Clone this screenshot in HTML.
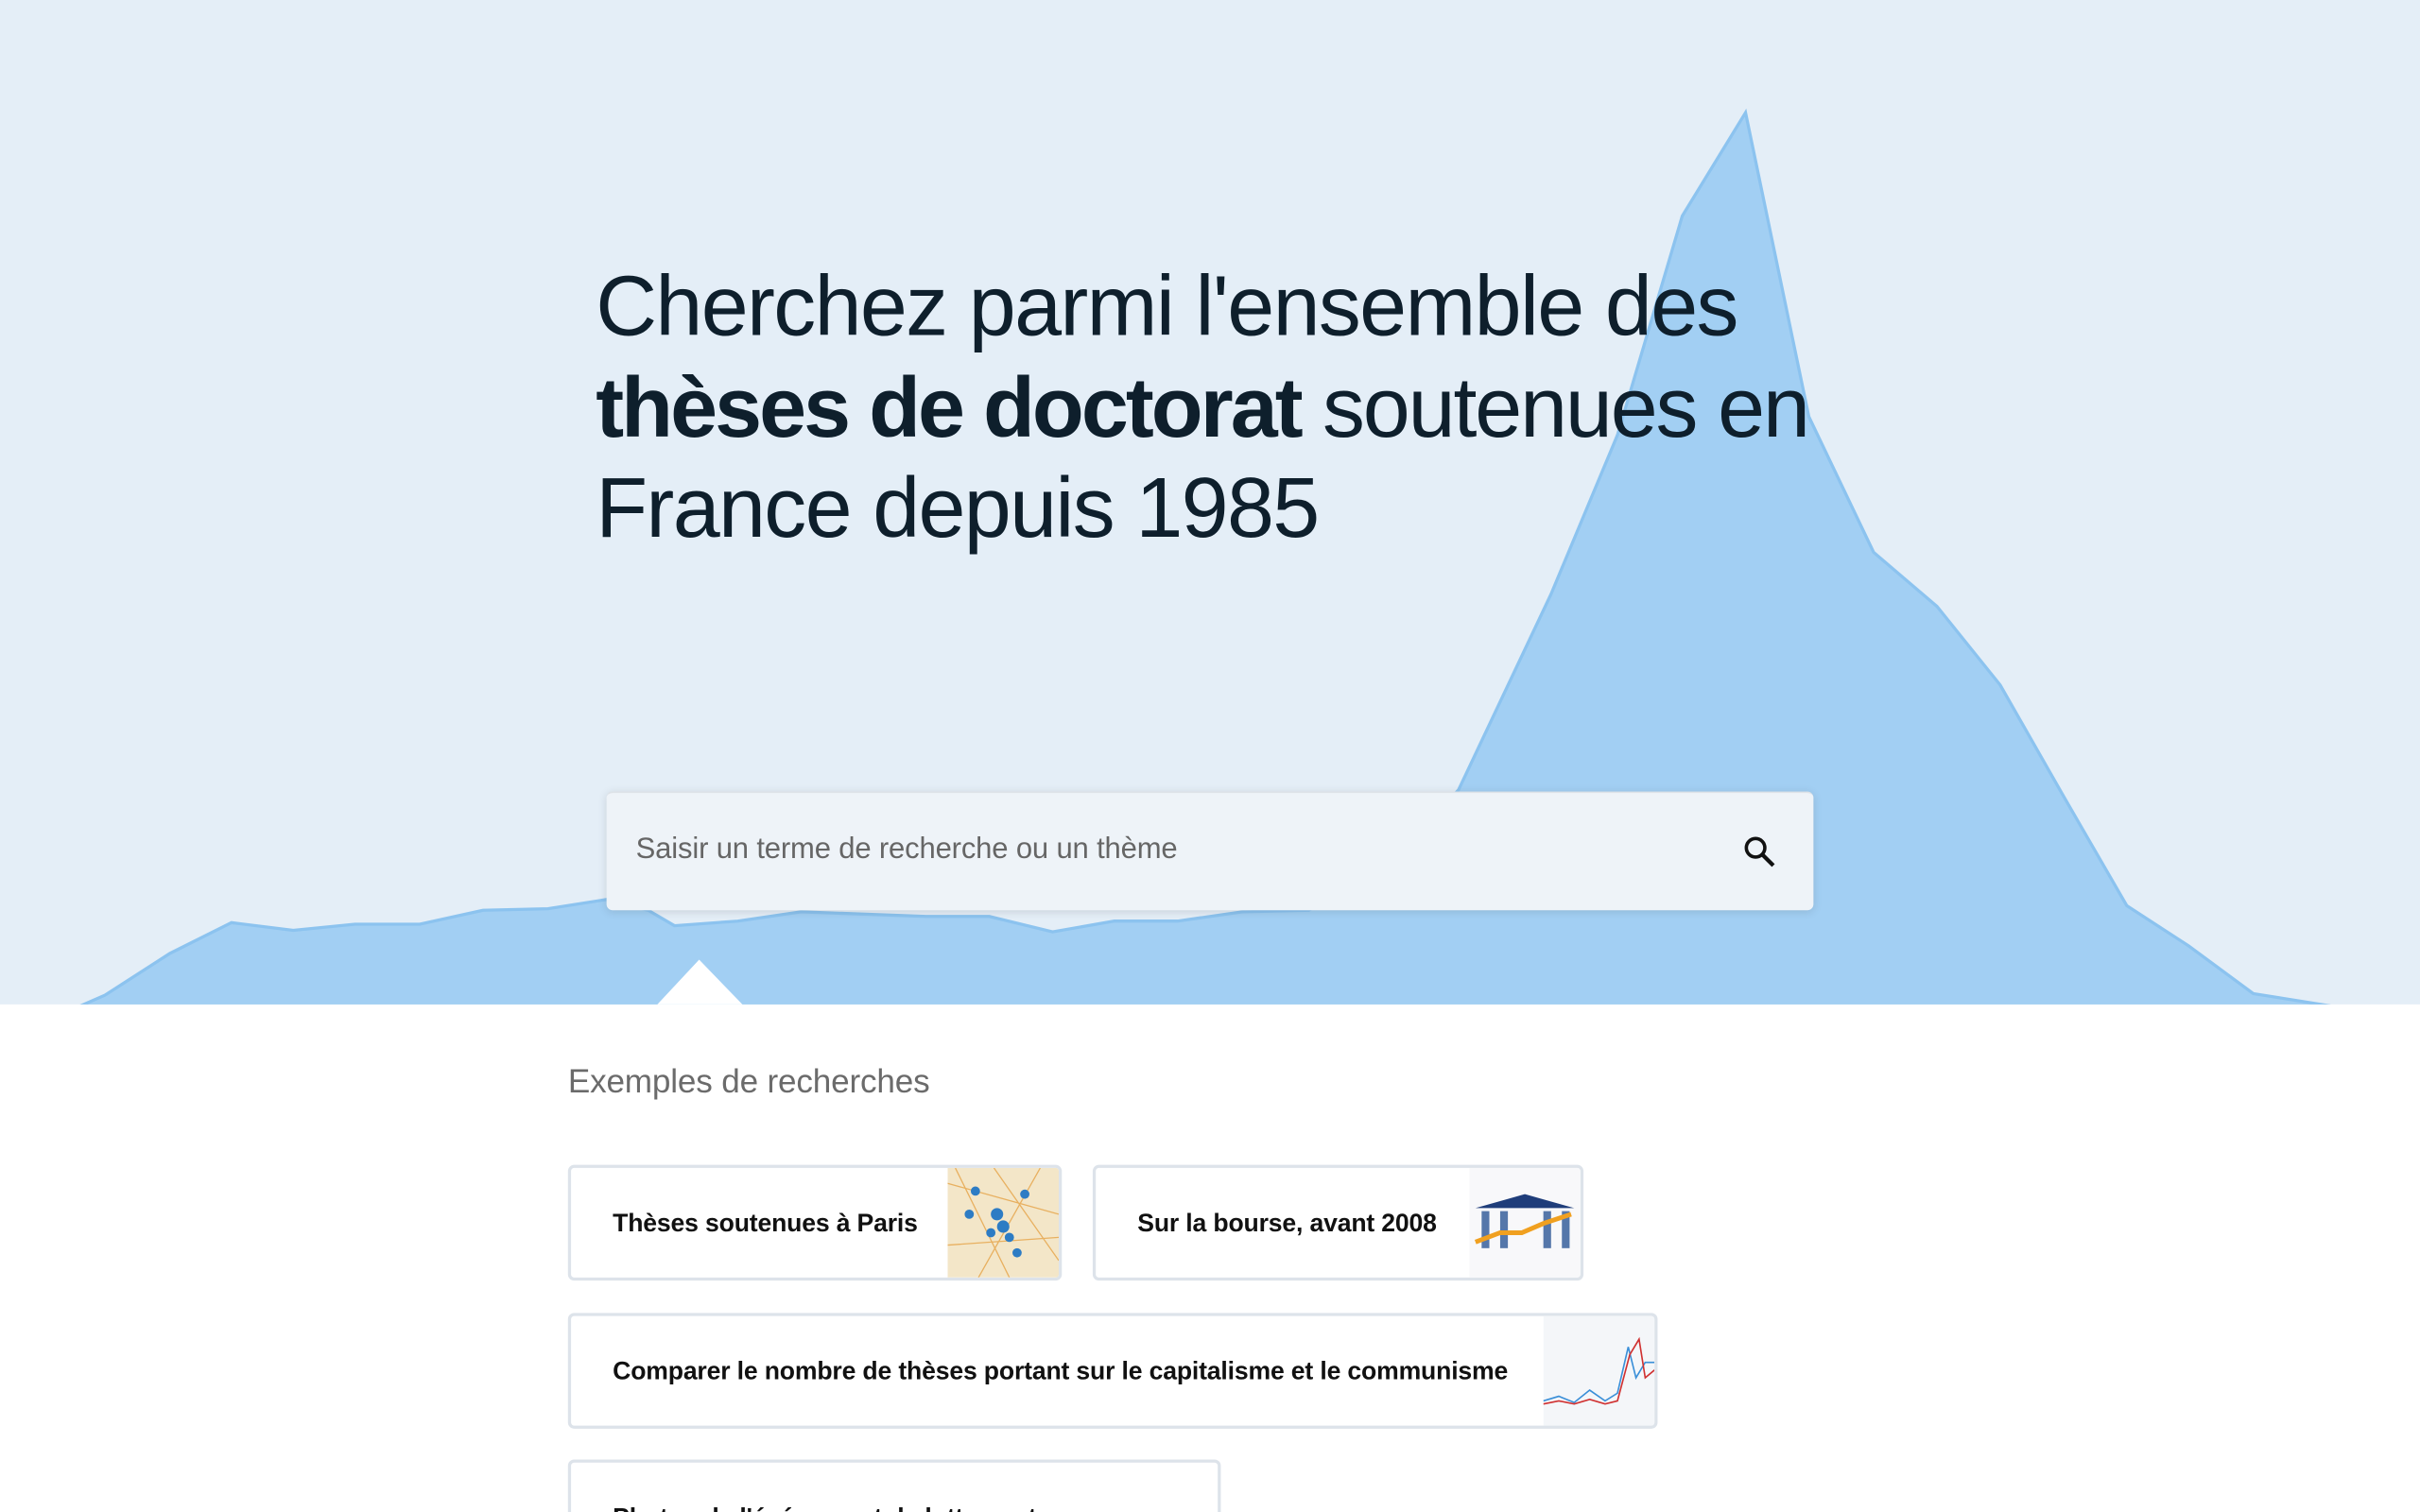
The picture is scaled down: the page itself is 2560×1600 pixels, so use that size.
<!DOCTYPE html>
<html><head><meta charset="utf-8"><style>
html,body{margin:0;padding:0;width:2560px;height:1600px;overflow:hidden;background:#fff}
#w{position:absolute;left:0;top:0;width:1568px;height:980px;transform:scale(1.632653);transform-origin:0 0;font-family:"Liberation Sans",sans-serif;overflow:hidden}
.hero{position:absolute;left:0;top:0;width:1568px;height:651px;background:#e4eef7;overflow:hidden}
h1{position:absolute;left:386px;top:166px;margin:0;font-weight:400;font-size:55px;line-height:65.5px;color:#0e1f2c;letter-spacing:-1px;white-space:nowrap}
h1 b{font-weight:700;letter-spacing:-1.8px}
h1 .s{letter-spacing:-1.3px}
.search{position:absolute;left:393px;top:513px;width:782px;height:77px;background:#eef3f8;border-radius:4px;box-shadow:0 1px 6px rgba(0,0,0,.12);border-top:1px solid #dde2e7;box-sizing:border-box}
.search span{position:absolute;left:19px;top:26px;font-size:19px;color:#666;letter-spacing:-.1px}
.lab{position:absolute;left:368px;top:689px;font-size:21.5px;color:#6b6b6b;letter-spacing:-.1px}
.card{position:absolute;height:75px;border:2px solid #dde3ea;border-radius:4px;box-sizing:border-box;background:#fff;overflow:hidden}
.card span{position:absolute;left:27px;top:27px;font-size:16.3px;font-weight:700;color:#111;letter-spacing:-.1px;white-space:nowrap}
.img{position:absolute;right:0;top:0;width:72px;height:71px}
</style></head><body><div id="w">
<div class="hero">
<svg width="1568" height="651" style="position:absolute;left:0;top:0">
<polygon fill="#a2cff3" stroke="#8cc3ef" stroke-width="2" points="52,652 68,645 110,618 150,598 190,603 230,599 272,599 313,590 355,589 393,583 420,590 437,600 478,597 519,591 600,594 641,594 682,604 722,597 763,597 805,591 848,590 900,560 945,512 1005,385 1048,282 1090,140 1131,73 1172,270 1214,358 1255,393 1296,444 1337,516 1378,587 1418,613 1460,644 1510,652"/>
<polygon fill="#fff" points="425,652 453,622 482,652"/>
</svg>
<h1>Cherchez parmi l'ensemble des<br><b>thèses de doctorat</b> <span class="s">soutenues en</span><br>France depuis 1985</h1>
<div class="search"><span>Saisir un terme de recherche ou un thème</span>
<svg width="24" height="24" viewBox="0 0 24 24" style="position:absolute;left:735px;top:26px"><circle cx="9.5" cy="9.5" r="6" fill="none" stroke="#111" stroke-width="2.2"/><line x1="14" y1="14" x2="21" y2="21" stroke="#111" stroke-width="2.6"/></svg>
</div>
</div>
<div class="lab">Exemples de recherches</div>
<div class="card" style="left:368px;top:755px;width:320px"><span>Thèses soutenues à Paris</span>
<svg class="img" viewBox="0 0 72 71"><rect width="72" height="71" fill="#f3e6c8"/><g stroke="#e8b060" stroke-width=".8" fill="none"><path d="M0 10L72 30M5 0L40 71M60 0L20 71M0 50L72 45M30 0L72 60"/></g><g fill="#2d7cc4"><circle cx="18" cy="15" r="3"/><circle cx="50" cy="17" r="3"/><circle cx="14" cy="30" r="3"/><circle cx="32" cy="30" r="4"/><circle cx="36" cy="38" r="4"/><circle cx="28" cy="42" r="3"/><circle cx="40" cy="45" r="3"/><circle cx="45" cy="55" r="3"/></g></svg></div>
<div class="card" style="left:708px;top:755px;width:318px"><span>Sur la bourse, avant 2008</span>
<svg class="img" viewBox="0 0 72 71"><rect width="72" height="71" fill="#f8f8fa"/><polygon points="4,26 36,17 68,26" fill="#1f3d7a"/><g fill="#5577aa"><rect x="8" y="28" width="5" height="24"/><rect x="20" y="28" width="5" height="24"/><rect x="48" y="28" width="5" height="24"/><rect x="60" y="28" width="5" height="24"/></g><polyline points="4,48 20,42 34,42 48,36 66,30" fill="none" stroke="#f0a020" stroke-width="3"/></svg></div>
<div class="card" style="left:368px;top:851px;width:706px"><span>Comparer le nombre de thèses portant sur le capitalisme et le communisme</span>
<svg class="img" viewBox="0 0 72 71"><rect width="72" height="71" fill="#f4f6f9"/><polyline points="0,55 10,52 20,56 30,48 40,55 48,50 55,20 60,40 66,30 72,30" fill="none" stroke="#3a8fd8" stroke-width="1"/><polyline points="0,57 10,55 20,57 30,54 40,57 48,55 56,25 62,15 66,40 72,35" fill="none" stroke="#d03030" stroke-width="1"/></svg></div>
<div class="card" style="left:368px;top:946px;width:423px;height:60px"><span>Photos de l'événement de lutte contre</span></div>
</div></body></html>
